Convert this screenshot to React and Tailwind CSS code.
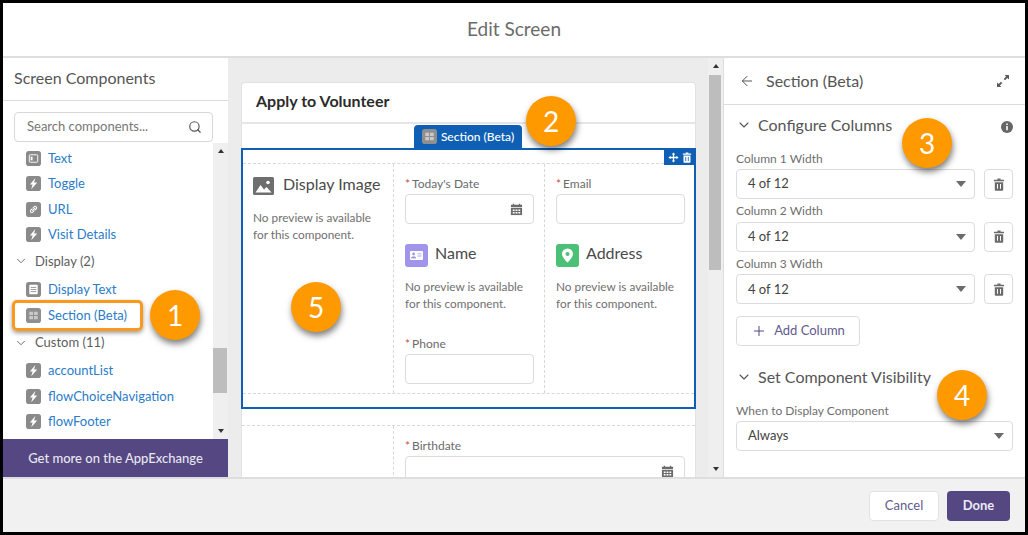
import React from 'react';
import { ArrowLeft, ChevronDown, Plus, Search } from 'lucide-react';

function Bolt() {
  return (
    <svg viewBox="0 0 16 16" className="w-[15px] h-[15px] shrink-0">
      <rect width="16" height="16" rx="3" fill="#8a8a8a" />
      <path d="M10 2 4.2 9H7l-1.4 5L12 6.8H8.6z" fill="#fff" />
    </svg>
  );
}

function TextIcon() {
  return (
    <svg viewBox="0 0 16 16" className="w-[15px] h-[15px] shrink-0">
      <rect width="16" height="16" rx="3" fill="#8a8a8a" />
      <rect x="3.5" y="4" width="9" height="8" rx="1" fill="none" stroke="#fff" strokeWidth="1" />
      <rect x="5" y="6" width="2" height="4" fill="#fff" />
    </svg>
  );
}

function LinkIcon() {
  return (
    <svg viewBox="0 0 16 16" className="w-[15px] h-[15px] shrink-0">
      <rect width="16" height="16" rx="3" fill="#8a8a8a" />
      <path d="M7 9.2 9.4 6.8M6.4 7.4 4.9 8.9a1.6 1.6 0 0 0 2.2 2.2l1.5-1.5M9.6 8.6l1.5-1.5a1.6 1.6 0 0 0-2.2-2.2L7.4 6.4" fill="none" stroke="#fff" strokeWidth="1.1" strokeLinecap="round" />
    </svg>
  );
}

function DisplayTextIcon() {
  return (
    <svg viewBox="0 0 16 16" className="w-[15px] h-[15px] shrink-0">
      <rect width="16" height="16" rx="3" fill="#8a8a8a" />
      <rect x="3.5" y="3" width="9" height="10" rx="1" fill="#fff" />
      <path d="M5 5.8h6M5 8h6M5 10.2h6" stroke="#8a8a8a" strokeWidth="0.9" />
    </svg>
  );
}

function SectionIcon({ className = 'w-[15px] h-[15px]' }) {
  return (
    <svg viewBox="0 0 16 16" className={`${className} shrink-0`}>
      <rect width="16" height="16" rx="3" fill="#8f8f8f" />
      <path d="M3.5 4h4v3.5h-4zM8.5 4h4v3.5h-4zM3.5 8.5h4V12h-4zM8.5 8.5h4V12h-4z" fill="#c9c9c9" />
    </svg>
  );
}

function Calendar() {
  return (
    <svg viewBox="0 0 14 14" className="w-[13px] h-[13px]">
      <path d="M3 0.8h1.4V2h5.2V0.8H11V2h2v2.6H1V2h2z" fill="#6b6b6b" />
      <path d="M1 5.4h12V13H1z" fill="#6b6b6b" />
      <path d="M3 7h2v1.6H3zM6 7h2v1.6H6zM9 7h2v1.6H9zM3 9.8h2v1.6H3zM6 9.8h2v1.6H6zM9 9.8h2v1.6H9z" fill="#fff" />
    </svg>
  );
}

function Trash({ color = '#6b6b6b', className = 'w-[12px] h-[13px]' }) {
  return (
    <svg viewBox="0 0 12 13" className={className}>
      <path d="M4.4 0.5h3.2v1.2H11v1.5H1V1.7h3.4z" fill={color} />
      <path d="M1.8 4.2h8.4V12a.8.8 0 0 1-.8.8H2.6a.8.8 0 0 1-.8-.8z" fill={color} />
      <path d="M4 6h1v4.8H4zM7 6h1v4.8H7z" fill={color === '#fff' ? '#0f5fb4' : '#fff'} />
    </svg>
  );
}

function Caret() {
  return <div className="w-0 h-0 border-x-[5px] border-x-transparent border-t-[6px] border-t-[#6b6b6b]" />;
}

function ScrollArrow({ up }) {
  return up ? (
    <div className="w-0 h-0 border-x-[3.5px] border-x-transparent border-b-[4px] border-b-[#333]" />
  ) : (
    <div className="w-0 h-0 border-x-[3.5px] border-x-transparent border-t-[4px] border-t-[#333]" />
  );
}

function Badge({ n, className }) {
  return (
    <div className={`absolute z-20 w-[50px] h-[50px] rounded-full bg-[#ff9900] text-white text-[28px] flex items-center justify-center shadow-[1px_4px_6px_rgba(0,0,0,0.5)] ${className}`}>
      {n}
    </div>
  );
}

function ListItem({ icon, label }) {
  return (
    <div className="h-[25.5px] flex items-center gap-[7px] pl-[23px] text-[13px] text-[#2b7cc9]">
      {icon}
      <span>{label}</span>
    </div>
  );
}

function Group({ label, className = '' }) {
  return (
    <div className={`flex items-center gap-[7px] pl-[11px] text-[13px] text-[#5c5c5c] ${className}`}>
      <ChevronDown size={14} strokeWidth={1.5} />
      <span>{label}</span>
    </div>
  );
}

function Sidebar() {
  return (
    <div className="w-[225px] shrink-0 bg-white flex flex-col">
      <div className="h-[43px] shrink-0 border-b border-[#dddddd] flex items-center pl-[11px] pb-[3px] text-[16px] text-[#555]">
        Screen Components
      </div>
      <div className="h-[42px] shrink-0 pt-[11px] pl-[11px] pr-[15px]">
        <div className="h-[30px] border border-[#d8d8d8] rounded-[4px] flex items-center justify-between pl-[12px] pr-[10px] text-[13px] text-[#777]">
          <span>Search components...</span>
          <Search size={14} strokeWidth={2} className="text-[#555]" />
        </div>
      </div>
      <div className="flex-1 flex min-h-0">
        <div className="flex-1 relative pt-[2.5px]">
          <ListItem icon={<TextIcon />} label="Text" />
          <ListItem icon={<Bolt />} label="Toggle" />
          <ListItem icon={<LinkIcon />} label="URL" />
          <ListItem icon={<Bolt />} label="Visit Details" />
          <Group label="Display (2)" className="h-[29.5px] pb-[2px]" />
          <ListItem icon={<DisplayTextIcon />} label="Display Text" />
          <div className="relative">
            <ListItem icon={<SectionIcon />} label="Section (Beta)" />
            <div className="absolute left-[9px] -top-[3px] w-[131px] h-[31px] border-[3px] border-[#f79a1e] rounded-[5px] shadow-[0_2px_4px_rgba(0,0,0,0.4)]" />
          </div>
          <Group label="Custom (11)" className="h-[30px]" />
          <ListItem icon={<Bolt />} label="accountList" />
          <ListItem icon={<Bolt />} label="flowChoiceNavigation" />
          <ListItem icon={<Bolt />} label="flowFooter" />
        </div>
        <div className="w-[15px] bg-[#efefef] flex flex-col items-center justify-between pt-[6px] pb-[6px] relative">
          <ScrollArrow up />
          <div className="absolute left-0 right-[1px] top-[205px] h-[45px] bg-[#bdbdbd]" />
          <ScrollArrow />
        </div>
      </div>
      <div className="h-[38px] shrink-0 bg-[#544782] text-[#e8e6f0] text-[13px] font-medium flex items-center justify-center pt-[1px]">
        Get more on the AppExchange
      </div>
    </div>
  );
}

function Label({ children }) {
  return (
    <div className="text-[12px] leading-[20px] text-[#6b6b6b]">
      <span className="text-[#c4553b] mr-[2px]">*</span>
      {children}
    </div>
  );
}

function Input({ calendar }) {
  return (
    <div className="h-[30px] border border-[#dcdcdc] rounded-[4px] bg-white flex items-center justify-end pr-[10px]">
      {calendar && <Calendar />}
    </div>
  );
}

function Preview({ icon, title, rowClass = 'h-[23px]' }) {
  return (
    <div>
      <div className={`flex items-center gap-[7px] ${rowClass}`}>
        {icon}
        <span className="text-[16px] text-[#4a4a4a] pb-[5px]">{title}</span>
      </div>
      <p className="mt-[11px] text-[11.8px] leading-[17px] text-[#6f6f6f]">
        No preview is available
        <br />
        for this component.
      </p>
    </div>
  );
}

function Canvas() {
  return (
    <div className="flex-1 bg-[#ececec] flex min-w-0">
      <div className="flex-1 pl-[13px] pr-[12px] pt-[24px] min-w-0 overflow-hidden">
        <div className="h-[396px] bg-white border-x border-t border-[#e2e2e2] rounded-t-[4px]">
          <div className="h-[41px] border-b-2 border-[#e6e6e6] flex items-center pl-[14px] pb-[3px] text-[16px] font-bold text-[#2b2b2b]">
            Apply to Volunteer
          </div>
          <div className="h-[24px] flex justify-end items-end pr-[173px]">
            <div className="w-[108px] h-[23px] bg-[#0f5fb4] rounded-t-[4px] flex items-center justify-center gap-[4px] text-white text-[12px] font-medium">
              <SectionIcon />
              Section (Beta)
            </div>
          </div>
          <div className="-mx-px relative h-[261px] border-2 border-[#0f5fb4] pt-[13px]">
            <div className="absolute -right-[2px] -top-[1px] w-[32px] h-[16px] bg-[#0f5fb4] flex items-center justify-center gap-[3px] text-white">
              <svg viewBox="0 0 12 12" className="w-[11px] h-[11px]">
                <path d="M6 0.5 8 2.8H6.7v2.5h2.5V4l2.3 2-2.3 2V6.7H6.7v2.5H8L6 11.5 4 9.2h1.3V6.7H2.8V8L0.5 6l2.3-2v1.3h2.5V2.8H4z" fill="#fff" />
              </svg>
              <Trash color="#fff" className="w-[10px] h-[11px]" />
            </div>
            <div className="h-[231px] border-y border-dashed border-[#d8d8d8] grid grid-cols-[150px_151px_1fr]">
              <div className="pl-[10px] pt-[10px]">
                <Preview
                  title="Display Image"
                  rowClass="h-[24px]"
                  icon={
                    <svg viewBox="0 0 21 18" className="w-[21px] h-[18px] mr-[2px]">
                      <rect width="21" height="18" rx="1.5" fill="#6e6e6e" />
                      <path d="M2.5 15.5 7.5 8l3.5 4.5 2.5-2.5 5 5.5z" fill="#fff" />
                      <circle cx="15" cy="5.5" r="1.8" fill="#fff" />
                    </svg>
                  }
                />
              </div>
              <div className="border-l border-dashed border-[#d8d8d8] pl-[11px] pr-[10px] pt-[10px]">
                <Label>Today's Date</Label>
                <Input calendar />
                <div className="mt-[20px]">
                  <Preview
                    title="Name"
                    icon={
                      <svg viewBox="0 0 23 23" className="w-[23px] h-[23px]">
                        <rect width="23" height="23" rx="3" fill="#a094ed" />
                        <rect x="5" y="7" width="13" height="9" rx="1" fill="#fff" />
                        <circle cx="8.6" cy="10" r="1.4" fill="#a094ed" />
                        <path d="M6.3 14c0-1.6 4.6-1.6 4.6 0zM12.5 9.8h4M12.5 12h4" fill="#a094ed" stroke="#a094ed" strokeWidth="0.8" />
                      </svg>
                    }
                  />
                </div>
                <div className="mt-[22px]">
                  <Label>Phone</Label>
                  <Input />
                </div>
              </div>
              <div className="border-l border-dashed border-[#d8d8d8] pl-[11px] pr-[9px] pt-[10px]">
                <Label>Email</Label>
                <Input />
                <div className="mt-[20px]">
                  <Preview
                    title="Address"
                    icon={
                      <svg viewBox="0 0 23 23" className="w-[23px] h-[23px]">
                        <rect width="23" height="23" rx="3" fill="#4bc076" />
                        <path d="M11.5 4.5a5.5 5.5 0 0 0-5.5 5.5c0 3.6 5.5 8.5 5.5 8.5S17 13.6 17 10a5.5 5.5 0 0 0-5.5-5.5z" fill="#fff" />
                        <circle cx="11.5" cy="10" r="2" fill="#4bc076" />
                      </svg>
                    }
                  />
                </div>
              </div>
            </div>
          </div>
          <div className="mt-[16px] h-[60px] border-t border-dashed border-[#d8d8d8] flex">
            <div className="w-[152px] border-r border-dashed border-[#d8d8d8]" />
            <div className="flex-1 pl-[11px] pr-[10px] pt-[10px]">
              <Label>Birthdate</Label>
              <Input calendar />
            </div>
          </div>
        </div>
      </div>
      <div className="w-[16px] shrink-0 bg-[#efefef] border-r border-[#dddddd] relative flex flex-col items-center justify-between pt-[6px] pb-[6px]">
        <ScrollArrow up />
        <div className="absolute left-[1px] right-[2px] top-[17px] h-[195px] bg-[#bdbdbd]" />
        <ScrollArrow />
      </div>
    </div>
  );
}

function WidthRow({ label }) {
  return (
    <div className="h-[52.7px]">
      <div className="h-[22px] flex items-end pb-[1.5px] text-[12px] text-[#6f6f6f]">{label}</div>
      <div className="flex gap-[9px]">
        <div className="flex-1 h-[30px] border border-[#dcdcdc] rounded-[4px] flex items-center justify-between pl-[11px] pr-[8px] text-[13px] text-[#444]">
          <span>4 of 12</span>
          <Caret />
        </div>
        <div className="w-[29px] h-[30px] border border-[#dcdcdc] rounded-[4px] flex items-center justify-center">
          <Trash />
        </div>
      </div>
    </div>
  );
}

function SectionHead({ label, right }) {
  return (
    <div className="flex items-center gap-[6px] text-[16px] text-[#555]">
      <ChevronDown size={16} strokeWidth={1.6} className="text-[#555]" />
      <span>{label}</span>
      {right}
    </div>
  );
}

function Properties() {
  return (
    <div className="w-[301px] shrink-0 bg-white flex flex-col">
      <div className="h-[47px] shrink-0 border-b border-[#dddddd] flex items-center justify-between pl-[15px] pr-[15px] pb-[1px]">
        <div className="flex items-center gap-[11px] text-[16px] text-[#555]">
          <ArrowLeft size={16} strokeWidth={1.5} />
          Section (Beta)
        </div>
        <svg viewBox="0 0 14 14" className="w-[14px] h-[14px]">
          <path d="M8.5 1H13v4.5L11.4 3.9 9 6.3 7.7 5 10.1 2.6zM5.5 13H1V8.5l1.6 1.6L5 7.7 6.3 9 3.9 11.4z" fill="#5c5c5c" />
        </svg>
      </div>
      <div className="flex-1 pl-[12px] pr-[12px] pt-[8px]">
        <SectionHead
          label="Configure Columns"
          right={
            <svg viewBox="0 0 12 12" className="w-[12px] h-[12px] ml-auto mt-[3px]">
              <circle cx="6" cy="6" r="6" fill="#666" />
              <path d="M5.2 5h1.6v4.2H5.2zM5.2 2.6h1.6v1.5H5.2z" fill="#fff" />
            </svg>
          }
        />
        <div className="mt-[10px]">
          <WidthRow label="Column 1 Width" />
          <WidthRow label="Column 2 Width" />
          <WidthRow label="Column 3 Width" />
        </div>
        <div className="mt-[11px] w-[124px] h-[30px] border border-[#dcdcdc] rounded-[4px] flex items-center justify-center gap-[7px] text-[13px] text-[#5f5a8f]">
          <Plus size={16} strokeWidth={1.5} className="text-[#544782]" />
          Add Column
        </div>
        <div className="mt-[19px]">
          <SectionHead label="Set Component Visibility" />
        </div>
        <div className="mt-[14px] text-[12px] text-[#6f6f6f] leading-[16px]">When to Display Component</div>
        <div className="mt-[2px] h-[30px] border border-[#dcdcdc] rounded-[4px] flex items-center justify-between pl-[11px] pr-[8px] text-[13px] text-[#444]">
          <span>Always</span>
          <Caret />
        </div>
      </div>
    </div>
  );
}

export default function App() {
  return (
    <div className="w-[1028px] h-[535px] bg-black p-[3px] overflow-hidden font-['Lato',sans-serif]">
      <div className="relative h-full bg-white flex flex-col overflow-hidden">
        <div className="h-[55px] shrink-0 border-b-2 border-[#dedede] flex items-center justify-center text-[19px] text-[#6b6b6b]">
          Edit Screen
        </div>
        <div className="flex-1 flex min-h-0">
          <Sidebar />
          <Canvas />
          <Properties />
        </div>
        <div className="h-[55px] shrink-0 bg-[#f1f1f1] border-t-2 border-[#dedede] flex items-center justify-end gap-[8px] pr-[15px]">
          <div className="w-[70px] h-[30px] bg-white border border-[#e2e2e2] rounded-[4px] flex items-center justify-center text-[13px] text-[#5f5a8f]">
            Cancel
          </div>
          <div className="w-[63px] h-[30px] bg-[#544782] rounded-[4px] flex items-center justify-center text-[13px] font-bold text-[#eceaf5]">
            Done
          </div>
        </div>
        <Badge n="1" className="left-[147px] top-[287px]" />
        <Badge n="2" className="left-[523px] top-[93px]" />
        <Badge n="3" className="left-[899px] top-[115px]" />
        <Badge n="4" className="left-[934px] top-[367px]" />
        <Badge n="5" className="left-[288px] top-[279px]" />
      </div>
    </div>
  );
}
